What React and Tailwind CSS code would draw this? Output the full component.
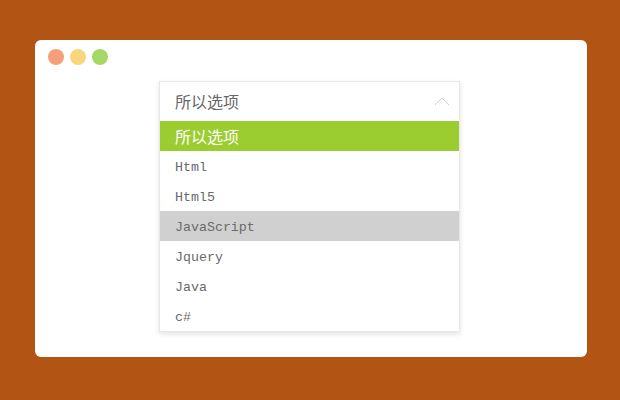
export default function App() {
  const items = ["Html", "Html5", "JavaScript", "Jquery", "Java", "c#"];
  return (
    <div className="w-[620px] h-[400px] bg-[#b25414] pt-[40px] pl-[35px]">
      <div className="w-[552px] h-[317px] bg-white rounded-[6px] relative">
        <div className="flex gap-[6px] pl-[13px] pt-[9px]">
          <span className="w-[16px] h-[16px] rounded-full bg-[#f5a07a]" />
          <span className="w-[16px] h-[16px] rounded-full bg-[#f8d67c]" />
          <span className="w-[16px] h-[16px] rounded-full bg-[#a5d865]" />
        </div>
        <div className="ml-[124px] mt-[16px] w-[301px] border border-[#e8e8e8] shadow-[0_2px_5px_rgba(0,0,0,0.12)] bg-white" style={{ fontFamily: '"Liberation Mono", "Noto Sans CJK SC", monospace' }}>
          <div className="h-[39px] flex items-center justify-between pl-[15px] pr-[9px] pb-[2px] text-[16px] text-[#666]" style={{ fontFamily: '"Noto Sans CJK SC", sans-serif' }}>
            <span>所以选项</span>
            <svg width="16" height="10" viewBox="0 0 16 10" fill="none" stroke="#cfcfcf" strokeWidth="1">
              <path d="M1 9 L8 2 L15 9" />
            </svg>
          </div>
          <div className="h-[30px] flex items-center pl-[15px] pb-[1px] bg-[#9bcd30] text-white text-[16px]" style={{ fontFamily: '"Noto Sans CJK SC", sans-serif' }}>
            所以选项
          </div>
          {items.map((it) => (
            <div
              key={it}
              className={
                it === "JavaScript"
                  ? "h-[30px] flex items-center pl-[15px] pt-[3px] bg-[#d0d0d0] text-[#6a6a6a] text-[13.3px]"
                  : "h-[30px] flex items-center pl-[15px] pt-[3px] text-[#6a6a6a] text-[13.3px]"
              }
            >
              {it}
            </div>
          ))}
        </div>
      </div>
    </div>
  );
}
